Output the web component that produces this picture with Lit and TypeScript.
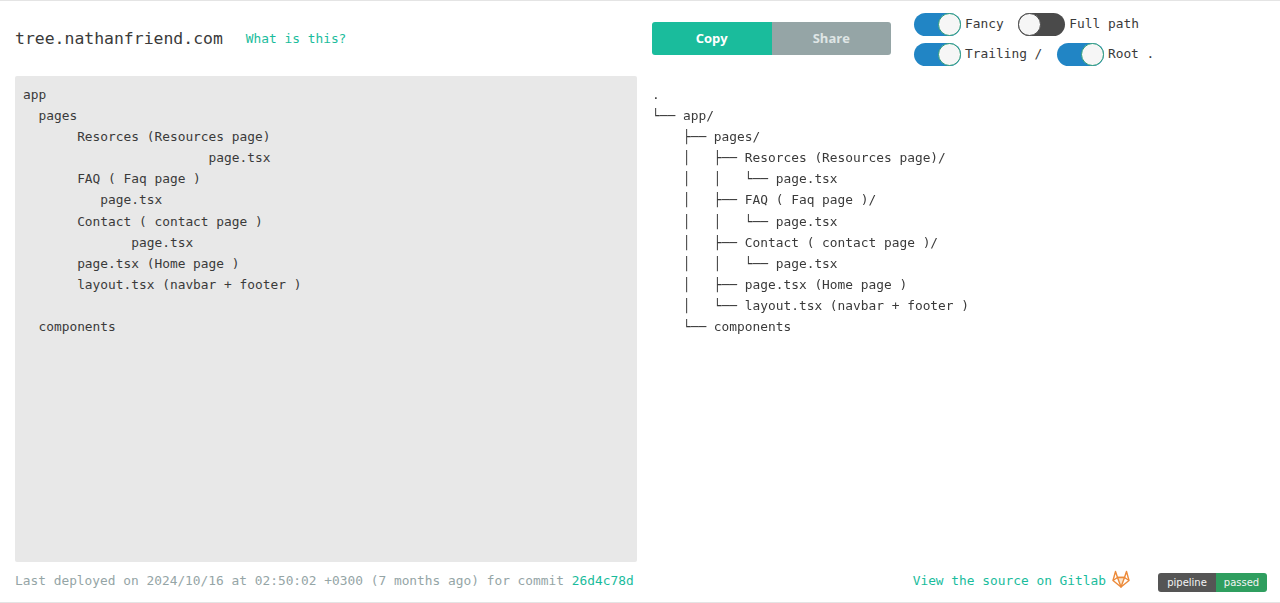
import { LitElement, html, css } from "lit";
import { customElement } from "lit/decorators.js";

const INPUT = `app
  pages
       Resorces (Resources page)
                        page.tsx
       FAQ ( Faq page )
          page.tsx
       Contact ( contact page )
              page.tsx
       page.tsx (Home page )
       layout.tsx (navbar + footer )

  components`;

const OUTPUT = `.
└── app/
    ├── pages/
    │   ├── Resorces (Resources page)/
    │   │   └── page.tsx
    │   ├── FAQ ( Faq page )/
    │   │   └── page.tsx
    │   ├── Contact ( contact page )/
    │   │   └── page.tsx
    │   ├── page.tsx (Home page )
    │   └── layout.tsx (navbar + footer )
    └── components`;

@customElement("app-root")
export class AppRoot extends LitElement {
  static styles = css`
    :host {
      display: block;
      height: 603px;
      box-sizing: border-box;
      border-top: 1px solid #e4e4e4;
      border-bottom: 1px solid #e4e4e4;
      overflow: hidden;
      background: #fff;
      font-family: "DejaVu Sans Mono", monospace;
      font-size: 12.85px;
      color: #3a3a3a;
    }
    .page {
      display: grid;
      grid-template-columns: 622px 1fr;
      grid-template-rows: 75px 486px 39px;
      column-gap: 15px;
      padding-left: 15px;
      height: 100%;
      box-sizing: border-box;
    }
    .brand {
      display: flex;
      align-items: center;
      gap: 23px;
    }
    .title { font-size: 16.45px; color: #3a3a3a; }
    a { color: #1abc9c; text-decoration: none; }
    .tools { display: flex; align-items: flex-start; }
    .buttons {
      display: flex;
      width: 239px;
      height: 33px;
      margin-top: 21px;
      border-radius: 3px;
      overflow: hidden;
      font-family: "Open Sans", sans-serif;
      font-weight: 700;
      font-size: 13px;
      color: #fff;
    }
    .buttons span {
      flex: 1;
      display: flex;
      align-items: center;
      justify-content: center;
      padding-bottom: 2px;
    }
    .copy { background: #1abc9c; }
    .share { background: #95a5a6; color: #dfe5e5; }
    .opts {
      margin-left: 23px;
      margin-top: 12px;
      display: flex;
      flex-direction: column;
      gap: 7px;
    }
    .row { display: flex; gap: 14.6px; }
    .opt { display: flex; align-items: center; gap: 4px; height: 23px; }
    .opt span { padding-bottom: 2px; }
    .sw {
      width: 47px;
      height: 23px;
      border-radius: 12px;
      box-sizing: border-box;
      background: #2185c5;
      display: flex;
      justify-content: flex-end;
    }
    .knob {
      width: 23px;
      height: 23px;
      box-sizing: border-box;
      border-radius: 50%;
      background: #f6f6f6;
      border: 1.5px solid #2f9e78;
    }
    .sw.off { background: #4a4a4a; justify-content: flex-start; }
    .sw.off .knob { border-color: #4a4a4a; }
    pre {
      margin: 0;
      font: inherit;
      line-height: 21.09px;
    }
    .input {
      background: #e8e8e8;
      border-radius: 2px;
      padding: 8px;
    }
    .output { padding: 8px 0 0 0; will-change: transform; }
    .foot-l {
      display: flex;
      align-items: center;
      color: #95a5a6;
      white-space: pre;
      padding-bottom: 3px;
    }
    .foot-r {
      display: flex;
      align-items: center;
      justify-content: flex-end;
      padding-right: 13px;
      padding-bottom: 3px;
    }
    .fox { margin-left: 6px; margin-top: -3px; }
    .badge {
      display: flex;
      margin-left: 28px;
      margin-top: 5px;
      height: 19px;
      border-radius: 3px;
      overflow: hidden;
      font-family: "DejaVu Sans", sans-serif;
      font-size: 10px;
      color: #f4f4f4;
    }
    .badge span { display: flex; align-items: center; justify-content: center; }
    .b1 { width: 58px; background: #555; }
    .b2 { width: 51px; background: #2f9e5f; }
  `;

  private opt(label: string, on = true) {
    return html`<div class="opt">
      <div class="sw ${on ? "" : "off"}"><div class="knob"></div></div>
      <span>${label}</span>
    </div>`;
  }

  render() {
    return html`<div class="page">
      <div class="brand">
        <span class="title">tree.nathanfriend.com</span>
        <a href="#">What is this?</a>
      </div>
      <div class="tools">
        <div class="buttons">
          <span class="copy">Copy</span><span class="share">Share</span>
        </div>
        <div class="opts">
          <div class="row">${this.opt("Fancy")}${this.opt("Full path", false)}</div>
          <div class="row">${this.opt("Trailing /")}${this.opt("Root .")}</div>
        </div>
      </div>
      <pre class="input">${INPUT}</pre>
      <pre class="output">${OUTPUT}</pre>
      <div class="foot-l">Last deployed on 2024/10/16 at 02:50:02 +0300 (7 months ago) for commit <a href="#">26d4c78d</a></div>
      <div class="foot-r">
        <a href="#">View the source on Gitlab</a>
        <svg class="fox" width="18" height="18" viewBox="0 0 18 18" fill="#f7c08a" stroke="#ec8a3a" stroke-width="1.4" stroke-linejoin="round">
          <path d="M9 17 1 10.5 3.5 1.5 5.5 7.5H12.5L14.5 1.5 17 10.5Z" fill="none"/>
          <path d="M9 17 5.5 7.5H12.5Z" fill="#fbe3c8"/>
          <path d="M1 10.5 5.5 7.5M17 10.5 12.5 7.5" fill="none"/>
        </svg>
        <div class="badge"><span class="b1">pipeline</span><span class="b2">passed</span></div>
      </div>
    </div>`;
  }
}
